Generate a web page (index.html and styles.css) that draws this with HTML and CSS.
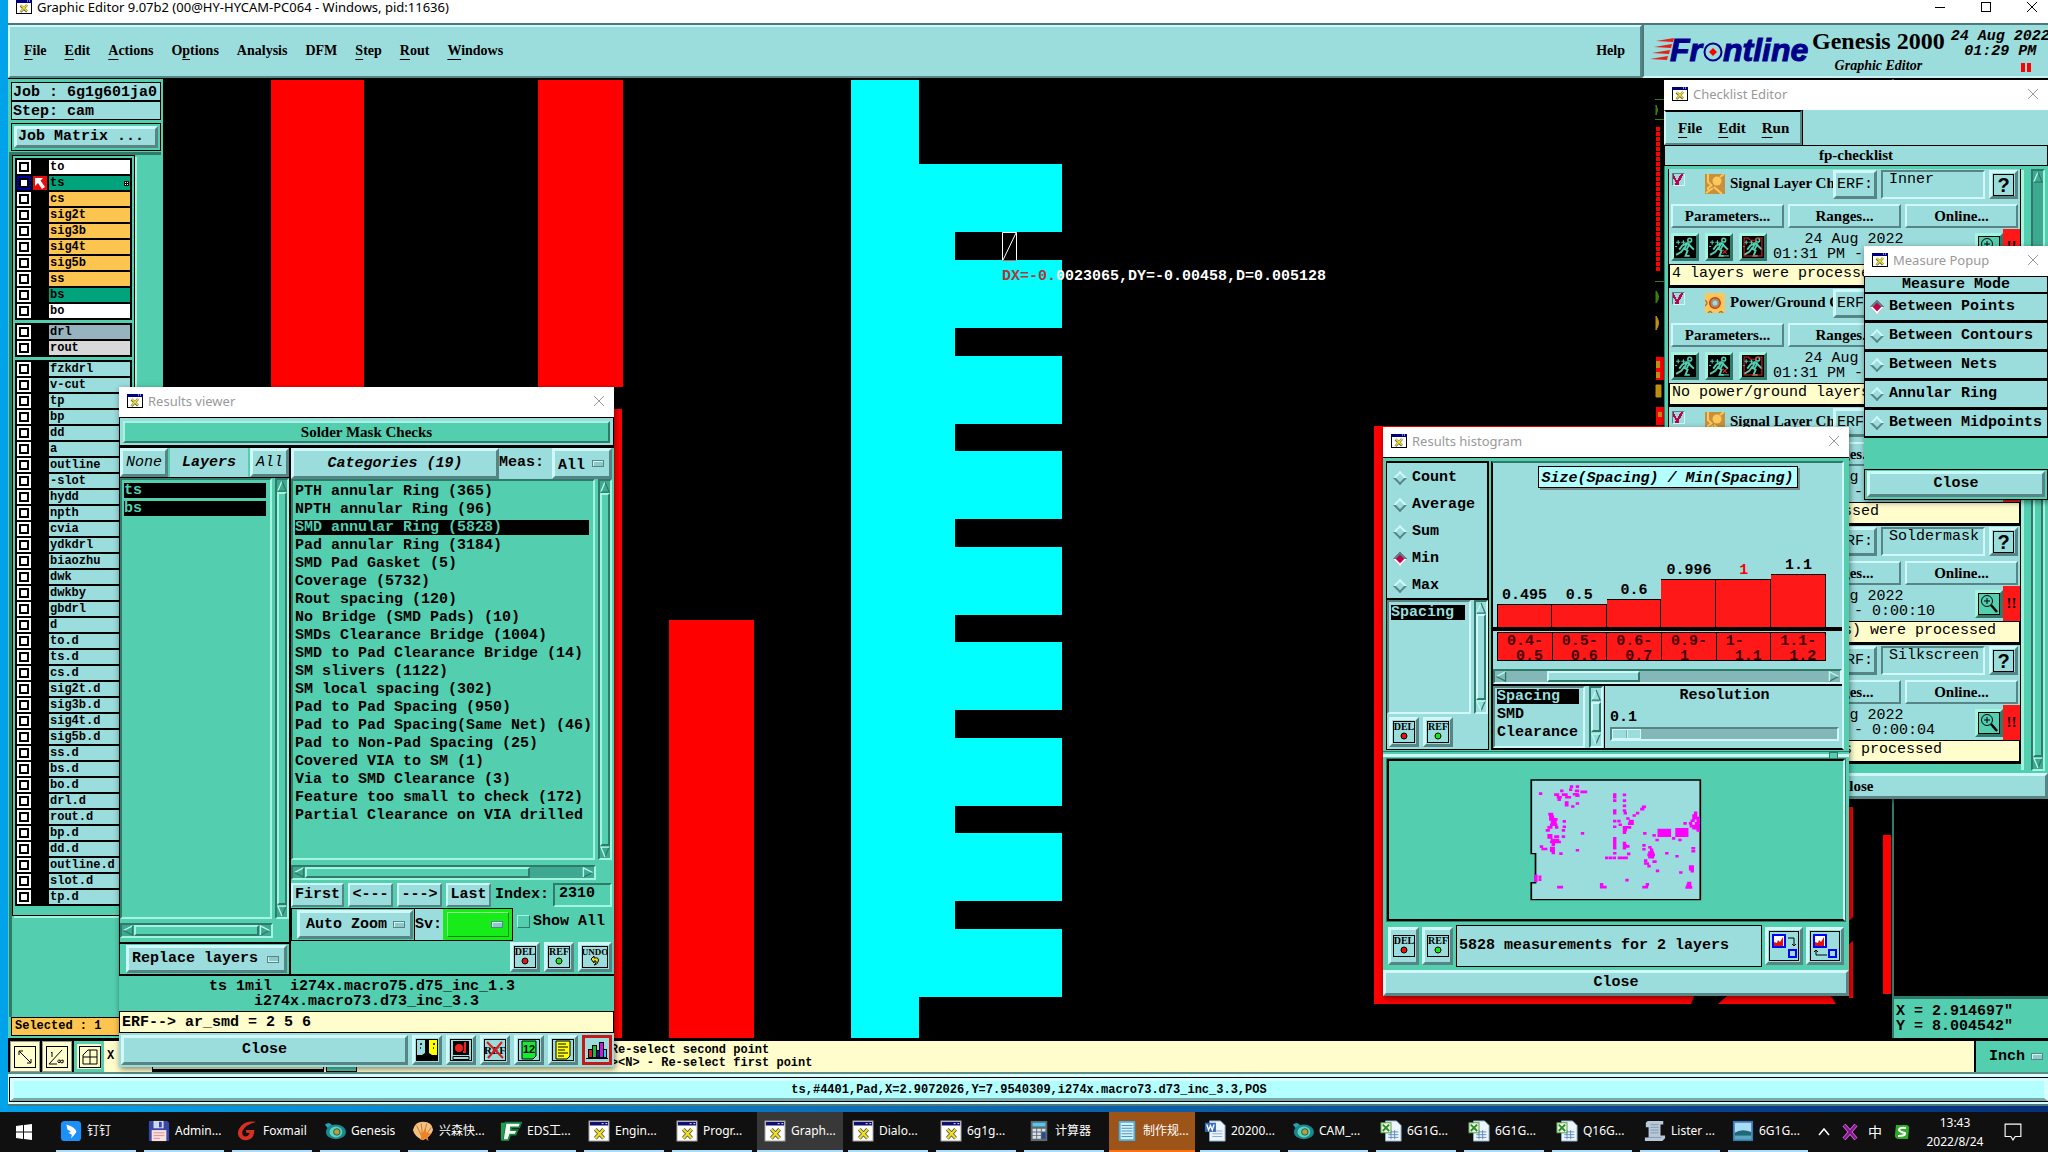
FILE: index.html
```html
<!DOCTYPE html>
<html lang="en">
<head>
    <meta charset="UTF-8">
    <meta name="viewport" content="width=device-width, initial-scale=1.0">
    <title>Graphic Editor 9.07b2</title>
    <link rel="stylesheet" href="styles.css">
</head>
<body>
    <!-- Shared icons -->
    <svg class="defs" width="0" height="0">
        <symbol id="xwin" viewBox="0 0 16 14">
            <rect x="0.5" y="0.5" width="15" height="13" fill="#fff" stroke="#000"/>
            <rect x="0" y="0" width="16" height="3" fill="#000080"/>
            <path d="M11 1h1M13 1h1" stroke="#fff" stroke-width="1"/>
            <path d="M4.500 5.500L11 11.500M11 5L4.500 12" stroke="#555" stroke-width="2.400"/>
            <path d="M4.500 5L11 11M11 5L4.500 11.500" stroke="#f0e020" stroke-width="1.600"/>
        </symbol>
        <symbol id="close" viewBox="0 0 12 12"><path d="M1 1L11 11M11 1L1 11" fill="none" stroke="currentColor"/></symbol>
        <symbol id="up" viewBox="0 0 12 14"><path d="M6 1L1 13" stroke="#b4fff0" stroke-width="1.500"/><path d="M1 13H11L6 1" fill="none" stroke="#2f7a68" stroke-width="1.500"/></symbol>
        <symbol id="down" viewBox="0 0 12 14"><path d="M11 1L6 13" stroke="#2f7a68" stroke-width="1.500"/><path d="M11 1H1L6 13" fill="none" stroke="#b4fff0" stroke-width="1.500"/></symbol>
        <symbol id="left" viewBox="0 0 12 12"><path d="M11 1L1 6" stroke="#b4fff0" stroke-width="1.500"/><path d="M11 1V11L1 6" fill="none" stroke="#2f7a68" stroke-width="1.500"/></symbol>
        <symbol id="right" viewBox="0 0 12 12"><path d="M11 6L1 11" stroke="#2f7a68" stroke-width="1.500"/><path d="M1 11V1L11 6" fill="none" stroke="#b4fff0" stroke-width="1.500"/></symbol>
        <symbol id="del" viewBox="0 0 22 22">
            <rect x="0.500" y="0.500" width="21" height="21" fill="none" stroke="#000"/>
            <text x="11" y="9" text-anchor="middle" font-family="Liberation Serif" font-size="10">DEL</text>
            <circle cx="11" cy="15" r="3" fill="#e81010" stroke="#000"/>
        </symbol>
        <symbol id="ref" viewBox="0 0 22 22">
            <rect x="0.500" y="0.500" width="21" height="21" fill="none" stroke="#000"/>
            <text x="11" y="9" text-anchor="middle" font-family="Liberation Serif" font-size="10">REF</text>
            <circle cx="11" cy="15" r="3" fill="#18e818" stroke="#000"/>
        </symbol>
        <symbol id="man" viewBox="0 0 21 21">
            <rect width="21" height="21" fill="#000"/>
            <path d="M2 6h4M4 4v4M7 6h4M9 4v4M1 10h2" stroke="#53cfb0"/>
            <circle cx="15" cy="4" r="1.800" fill="none" stroke="#53cfb0" stroke-width="1.500"/>
            <path d="M13 6L10 12L13 14L11 19H15M10 11L7 15L2 18M13 7L16 10L19 13M12 7L8 9L5 13M15 7L12 13" fill="none" stroke="#53cfb0" stroke-width="1.800"/>
        </symbol>
        <symbol id="lens" viewBox="0 0 22 22">
            <rect x="0.500" y="0.500" width="21" height="21" fill="none" stroke="#000"/>
            <circle cx="9" cy="8" r="5.500" fill="none" stroke="#000"/>
            <path d="M6 8h6M9 5v6" stroke="#000"/>
            <path d="M13 12L19 19" stroke="#000" stroke-width="2.500"/>
        </symbol>
        <symbol id="signal" viewBox="0 0 20 20">
            <rect width="20" height="20" fill="#c8903c"/>
            <circle cx="12" cy="7" r="4.500" fill="#fdc75a"/>
            <path d="M3 0V8L7 12M7 11L3 14V16M9 13L17 20M15 3L19 0M8 14L1 19" stroke="#fdc75a" stroke-width="2" fill="none"/>
        </symbol>
        <symbol id="ground" viewBox="0 0 20 20">
            <rect width="20" height="20" fill="#fdc75a"/>
            <circle cx="10" cy="10" r="5" fill="#9bdcdc" stroke="#d83818" stroke-width="2"/>
            <circle cx="10" cy="10" r="3.500" fill="none" stroke="#a0906c" stroke-width="2"/>
            <path d="M0 7Q4 10 0 13M3 20Q5 17 7 20M14 20Q16 17 18 20" fill="none" stroke="#a87838" stroke-width="1.500"/>
        </symbol>
        <symbol id="xapp" viewBox="0 0 24 24">
            <rect x="1" y="1" width="22" height="22" fill="#fff" stroke="#888"/>
            <rect x="2" y="2" width="20" height="4" fill="#101070"/>
            <path d="M15 4h2M19 4h2" stroke="#fff"/>
            <path d="M8 10L17 20M17 10L8 20" stroke="#444" stroke-width="4"/>
            <path d="M8 10L17 20M17 10L8 20" stroke="#f0e020" stroke-width="2.500"/>
        </symbol>
        <symbol id="genesis" viewBox="0 0 24 24">
            <path d="M1 5Q6 1 9 6L4 9Z" fill="#28a0b0"/>
            <ellipse cx="13" cy="13" rx="11" ry="8" fill="#188890"/>
            <ellipse cx="13" cy="13" rx="7" ry="6" fill="#60d0b8"/>
            <circle cx="14" cy="13" r="3.500" fill="#b8a030" stroke="#105868"/>
        </symbol>
        <symbol id="excel" viewBox="0 0 24 24">
            <path d="M6 1H18L23 6V23H6Z" fill="#eef4fb" stroke="#8ab"/>
            <path d="M9 13h11M9 16h11M9 19h11M12 11v10M16 11v10" stroke="#5a88c0"/>
            <rect x="1" y="3" width="11" height="11" fill="#e8f4e0" stroke="#4a9a40"/>
            <path d="M3 5L10 12M10 5L3 12" stroke="#2c8a28" stroke-width="2"/>
        </symbol>
    </svg>

    <main class="editor">
        <header class="titlebar">
            <svg class="xicon"><use href="#xwin"/></svg>
            <h1>Graphic Editor 9.07b2 (00@HY-HYCAM-PC064 - Windows, pid:11636)</h1>
            <button aria-label="Minimize"><svg viewBox="0 0 12 12"><path d="M1 6.500H11" stroke="#000"/></svg></button>
            <button aria-label="Maximize"><svg viewBox="0 0 12 12"><rect x="1.500" y="1.500" width="9" height="9" fill="none" stroke="#000"/></svg></button>
            <button aria-label="Close"><svg><use href="#close"/></svg></button>
        </header>

        <div class="top">
            <nav class="menubar">
                <a href="#"><u>F</u>ile</a>
                <a href="#"><u>E</u>dit</a>
                <a href="#"><u>A</u>ctions</a>
                <a href="#">O<u>p</u>tions</a>
                <a href="#">Analysis</a>
                <a href="#">DFM</a>
                <a href="#"><u>S</u>tep</a>
                <a href="#"><u>R</u>out</a>
                <a href="#"><u>W</u>indows</a>
                <a href="#" class="help">Help</a>
            </nav>
            <div class="brand">
                <svg class="frontline" viewBox="0 0 162 34" role="img">
                    <path d="M6 6L24 3L23 7ZM4 12L22 9L21 13ZM2 18L20 15L19 19ZM0 24L18 21L17 25Z" fill="#e82018"/>
                    <text y="26" font-family="Liberation Sans" font-size="32" font-weight="bold" font-style="italic" fill="#000088" stroke="#000088"><tspan x="20">Fr</tspan><tspan x="73">ntline</tspan></text>
                    <circle cx="63" cy="17" r="8.500" fill="none" stroke="#000088" stroke-width="2"/>
                    <path d="M63 13L67 17L63 21L59 17Z" fill="#f00"/>
                </svg>
                <div class="product">
                    <strong>Genesis 2000</strong>
                    <em>Graphic Editor</em>
                </div>
                <div class="clock">24 Aug 2022<br>01:29 PM<i class="pause"></i></div>
            </div>
        </div>

        <div class="workspace">
            <aside class="side">
                <div class="job">Job : 6g1g601ja0</div>
                <div class="job">Step: cam</div>
                <div class="matrix"><button class="btn">Job Matrix ...</button></div>
                <div class="layers">
                    <div class="layer-frame">
                        <ul>
                            <li class="white"><label><input type="checkbox"><span>to</span></label></li>
                            <li class="mask active"><label><input type="checkbox" checked><svg viewBox="0 0 14 14"><path d="M2 2H10L7.500 4.500L12 11L9 13L5 7L2 10Z" fill="#fff"/></svg><span>ts<svg class="grid" viewBox="0 0 5 5"><rect width="5" height="5"/><path d="M1 1.500h1M3 1.500h1M1 3.500h1M3 3.500h1" stroke="#fff"/></svg></span></label></li>
                            <li class="copper"><label><input type="checkbox"><span>cs</span></label></li>
                            <li class="copper"><label><input type="checkbox"><span>sig2t</span></label></li>
                            <li class="copper"><label><input type="checkbox"><span>sig3b</span></label></li>
                            <li class="copper"><label><input type="checkbox"><span>sig4t</span></label></li>
                            <li class="copper"><label><input type="checkbox"><span>sig5b</span></label></li>
                            <li class="copper"><label><input type="checkbox"><span>ss</span></label></li>
                            <li class="mask"><label><input type="checkbox"><span>bs</span></label></li>
                            <li class="white"><label><input type="checkbox"><span>bo</span></label></li>
                        </ul>
                        <ul>
                            <li class="drill"><label><input type="checkbox"><span>drl</span></label></li>
                            <li class="rout"><label><input type="checkbox"><span>rout</span></label></li>
                        </ul>
                        <ul>
                            <li><label><input type="checkbox"><span>fzkdrl</span></label></li>
                            <li><label><input type="checkbox"><span>v-cut</span></label></li>
                            <li><label><input type="checkbox"><span>tp</span></label></li>
                            <li><label><input type="checkbox"><span>bp</span></label></li>
                            <li><label><input type="checkbox"><span>dd</span></label></li>
                            <li><label><input type="checkbox"><span>a</span></label></li>
                            <li><label><input type="checkbox"><span>outline</span></label></li>
                            <li><label><input type="checkbox"><span>-slot</span></label></li>
                            <li><label><input type="checkbox"><span>hydd</span></label></li>
                            <li><label><input type="checkbox"><span>npth</span></label></li>
                            <li><label><input type="checkbox"><span>cvia</span></label></li>
                            <li><label><input type="checkbox"><span>ydkdrl</span></label></li>
                            <li><label><input type="checkbox"><span>biaozhu</span></label></li>
                            <li><label><input type="checkbox"><span>dwk</span></label></li>
                            <li><label><input type="checkbox"><span>dwkby</span></label></li>
                            <li><label><input type="checkbox"><span>gbdrl</span></label></li>
                            <li><label><input type="checkbox"><span>d</span></label></li>
                            <li><label><input type="checkbox"><span>to.d</span></label></li>
                            <li><label><input type="checkbox"><span>ts.d</span></label></li>
                            <li><label><input type="checkbox"><span>cs.d</span></label></li>
                            <li><label><input type="checkbox"><span>sig2t.d</span></label></li>
                            <li><label><input type="checkbox"><span>sig3b.d</span></label></li>
                            <li><label><input type="checkbox"><span>sig4t.d</span></label></li>
                            <li><label><input type="checkbox"><span>sig5b.d</span></label></li>
                            <li><label><input type="checkbox"><span>ss.d</span></label></li>
                            <li><label><input type="checkbox"><span>bs.d</span></label></li>
                            <li><label><input type="checkbox"><span>bo.d</span></label></li>
                            <li><label><input type="checkbox"><span>drl.d</span></label></li>
                            <li><label><input type="checkbox"><span>rout.d</span></label></li>
                            <li><label><input type="checkbox"><span>bp.d</span></label></li>
                            <li><label><input type="checkbox"><span>dd.d</span></label></li>
                            <li><label><input type="checkbox"><span>outline.d</span></label></li>
                            <li><label><input type="checkbox"><span>slot.d</span></label></li>
                            <li><label><input type="checkbox"><span>tp.d</span></label></li>
                        </ul>
                    </div>
                </div>
                <div class="selected">Selected : 1</div>
            </aside>

            <svg class="board">
                <g fill="#f00">
                    <rect x="108" y="1" width="93" height="308"/>
                    <rect x="375" y="1" width="85" height="307"/>
                    <rect x="375" y="330" width="84" height="629"/>
                    <rect x="506" y="541" width="85" height="418"/>
                    <path d="M1211 347H1686V917H1668L1673 925H1563L1552 925L1560 917H1535L1531 925H1211Z"/>
                    <path d="M1686 728h4v110l-4 4zM1686 865l4-3v57h-4z"/>
                    <rect x="1720" y="756" width="8" height="159"/>
                </g>
                <path d="M1531 917H1564L1555 925H1528Z"/>
                <!-- comb pad -->
                <g fill="#0ff">
                    <rect x="688" y="1" width="68" height="958"/>
                    <rect x="755" y="85" width="37" height="833"/>
                    <path d="M791 85h108v68H791zM791 181h108v68H791zM791 277h108v68H791zM791 372h108v68H791zM791 468h108v68H791zM791 563h108v68H791zM791 659h108v68H791zM791 754h108v68H791zM791 850h108v68H791z"/>
                </g>
                <path d="M839.500 181V153.500H853.500V181M840 181L853 154" fill="none" stroke="#fff"/>
                <path d="M840 181.500H853" stroke="#c06060"/>
                <text x="839" y="201" font-family="Liberation Mono" font-size="15" font-weight="bold" fill="#fff"><tspan fill="#b03838">DX=-0.</tspan>0023065,DY=-0.00458,D=0.005128</text>
                <!-- neighbouring nets next to the checklist -->
                <path d="M1492 20.500h10M1492 40.500h10M1492 202.500h10" stroke="#3c8010"/>
                <path d="M1495 48V193" stroke="#f00" stroke-width="4" stroke-dasharray="4 1"/>
                <path d="M1493 26q3 5 0 10zM1493 212q5 6 0 12z" fill="#3c8010" stroke="#3c8010"/>
                <path d="M1493 237q5 7 0 14zM1493 306h5v12h-5z" fill="#c09010" stroke="#c09010"/>
                <path d="M1493 278h8v23h-8zM1493 328h8v18h-8z" fill="#f00"/>
                <path d="M1493 282h4v7h-4zM1493 293h4v6h-4zM1495 333h4v5h-4z" fill="#c09010"/>
            </svg>

            <div class="overview">
                <div class="coords">X = 2.914697"<br>Y = 8.004542"</div>
            </div>
        </div>

        <div class="hintbar">
            <div class="tools">
                <button aria-label="Snap"><svg viewBox="0 0 22 22"><rect x="0.500" y="0.500" width="21" height="21" fill="none" stroke="#000"/><path d="M5 5L17 17M5 9V5H9M17 13V17H13" fill="none" stroke="#000"/></svg></button>
                <button aria-label="Angle"><svg viewBox="0 0 22 22"><rect x="0.500" y="0.500" width="21" height="21" fill="none" stroke="#000"/><path d="M3 18L16 4M3 18H11M6 6V11M5 7L6 6M14 14q-4 0-1 3q3-4 4-3q1 3-1 3q-2 0-2-3" fill="none" stroke="#000"/></svg></button>
                <button class="on" aria-label="Grid"><svg viewBox="0 0 22 22"><rect x="0.500" y="0.500" width="21" height="21" fill="none" stroke="#000"/><path d="M4 18V9L9 4H18V18ZM4 11H18M11 4V18" fill="none" stroke="#000"/></svg></button>
            </div>
            <label class="xfield">X <input type="text"></label>
            <button class="mid" aria-label="Mode"></button>
            <p>M2 Re-select second point<br>&lt;M3&gt;&lt;N&gt; - Re-select first point</p>
            <select class="inch" aria-label="Units"><option>Inch</option></select>
        </div>

        <div class="status"><p>ts,#4401,Pad,X=2.9072026,Y=7.9540309,i274x.macro73.d73_inc_3.3,POS</p></div>
    </main>

    <!-- Checklist Editor -->
    <section class="window checklist">
        <header><svg class="xicon"><use href="#xwin"/></svg><h2>Checklist Editor</h2><button aria-label="Close"><svg><use href="#close"/></svg></button></header>
        <nav>
            <a href="#"><u>F</u>ile</a>
            <a href="#"><u>E</u>dit</a>
            <a href="#"><u>R</u>un</a>
        </nav>
        <h3>fp-checklist</h3>
        <div class="list-wrap">
            <div class="items">
                <article>
                    <div class="head"><input type="checkbox" checked aria-label="Signal Layer"><svg><use href="#signal"/></svg><b>Signal Layer Checks</b><button class="btn">ERF:</button><input type="text" value="Inner" aria-label="ERF"><button class="btn ask"><span>?</span></button></div>
                    <div class="actions"><button class="btn">Parameters...</button><button class="btn">Ranges...</button><button class="btn">Online...</button></div>
                    <div class="run">
                        <button aria-label="Run"><svg><use href="#man"/></svg></button><button aria-label="Run on region"><svg viewBox="0 0 21 21"><use href="#man"/><path d="M14 13L18 17M18 13L14 17" stroke="#e02020"/><path d="M13 19H20" stroke="#53cfb0"/></svg></button><button aria-label="Run on profile"><svg viewBox="0 0 21 21"><use href="#man"/><path d="M2 2H6L8 4H13L15 2H19V19H2Z" fill="none" stroke="#e02020"/></svg></button>
                        <p>24 Aug 2022<br>01:31 PM - 0:00:10</p>
                        <button class="zoom" aria-label="Show results"><svg><use href="#lens"/></svg></button><span class="alert">!!</span>
                    </div>
                    <p class="note">4 layers were processed</p>
                </article>
                <article>
                    <div class="head"><input type="checkbox" checked aria-label="Power/Ground"><svg><use href="#ground"/></svg><b>Power/Ground Checks</b><button class="btn">ERF:</button><input type="text" value="Inner" aria-label="ERF"><button class="btn ask"><span>?</span></button></div>
                    <div class="actions"><button class="btn">Parameters...</button><button class="btn">Ranges...</button><button class="btn">Online...</button></div>
                    <div class="run">
                        <button aria-label="Run"><svg><use href="#man"/></svg></button><button aria-label="Run on region"><svg viewBox="0 0 21 21"><use href="#man"/><path d="M14 13L18 17M18 13L14 17" stroke="#e02020"/><path d="M13 19H20" stroke="#53cfb0"/></svg></button><button aria-label="Run on profile"><svg viewBox="0 0 21 21"><use href="#man"/><path d="M2 2H6L8 4H13L15 2H19V19H2Z" fill="none" stroke="#e02020"/></svg></button>
                        <p>24 Aug 2022<br>01:31 PM - 0:00:00</p>
                        <button class="zoom" aria-label="Show results"><svg><use href="#lens"/></svg></button><span class="alert">!!</span>
                    </div>
                    <p class="note">No power/ground layers</p>
                </article>
                <article>
                    <div class="head"><input type="checkbox" checked aria-label="Signal Layer"><svg><use href="#signal"/></svg><b>Signal Layer Checks</b><button class="btn">ERF:</button><input type="text" value="Outer" aria-label="ERF"><button class="btn ask"><span>?</span></button></div>
                    <div class="actions"><button class="btn">Parameters...</button><button class="btn">Ranges...</button><button class="btn">Online...</button></div>
                    <div class="run">
                        <button aria-label="Run"><svg><use href="#man"/></svg></button><button aria-label="Run on region"><svg><use href="#man"/></svg></button><button aria-label="Run on profile"><svg><use href="#man"/></svg></button>
                        <p>24 Aug 2022<br>01:31 PM - 0:00:10</p>
                        <button class="zoom" aria-label="Show results"><svg><use href="#lens"/></svg></button><span class="alert">!!</span>
                    </div>
                    <p class="note">4 layers were processed</p>
                </article>
                <article>
                    <div class="head"><input type="checkbox" checked aria-label="Solder Mask"><svg><use href="#signal"/></svg><b>Solder Mask Checks</b><button class="btn">ERF:</button><input type="text" value="Soldermask" aria-label="ERF"><button class="btn ask"><span>?</span></button></div>
                    <div class="actions"><button class="btn">Parameters...</button><button class="btn">Ranges...</button><button class="btn">Online...</button></div>
                    <div class="run">
                        <button aria-label="Run"><svg><use href="#man"/></svg></button><button aria-label="Run on region"><svg><use href="#man"/></svg></button><button aria-label="Run on profile"><svg><use href="#man"/></svg></button>
                        <p>24 Aug 2022<br>01:31 PM - 0:00:10</p>
                        <button class="zoom" aria-label="Show results"><svg><use href="#lens"/></svg></button><span class="alert">!!</span>
                    </div>
                    <p class="note">2 soldermask layer(s) were processed</p>
                </article>
                <article>
                    <div class="head"><input type="checkbox" checked aria-label="Silk Screen"><svg><use href="#signal"/></svg><b>Silk Screen Checks</b><button class="btn">ERF:</button><input type="text" value="Silkscreen" aria-label="ERF"><button class="btn ask"><span>?</span></button></div>
                    <div class="actions"><button class="btn">Parameters...</button><button class="btn">Ranges...</button><button class="btn">Online...</button></div>
                    <div class="run">
                        <button aria-label="Run"><svg><use href="#man"/></svg></button><button aria-label="Run on region"><svg><use href="#man"/></svg></button><button aria-label="Run on profile"><svg><use href="#man"/></svg></button>
                        <p>24 Aug 2022<br>01:31 PM - 0:00:04</p>
                        <button class="zoom" aria-label="Show results"><svg><use href="#lens"/></svg></button><span class="alert">!!</span>
                    </div>
                    <p class="note">2 silk screen layers processed</p>
                </article>
            </div>
            <div class="vbar low"><svg><use href="#up"/></svg><i></i><svg><use href="#down"/></svg></div>
        </div>
        <button class="btn wide">Close</button>
    </section>

    <!-- Measure Popup -->
    <section class="window measure">
        <header><svg class="xicon"><use href="#xwin"/></svg><h2>Measure Popup</h2><button aria-label="Close"><svg><use href="#close"/></svg></button></header>
        <h3>Measure Mode</h3>
        <label><input type="radio" name="measure" checked>Between Points</label>
        <label><input type="radio" name="measure">Between Contours</label>
        <label><input type="radio" name="measure">Between Nets</label>
        <label><input type="radio" name="measure">Annular Ring</label>
        <label><input type="radio" name="measure">Between Midpoints</label>
        <div class="foot"><button class="btn">Close</button></div>
    </section>

    <!-- Results viewer -->
    <section class="window viewer">
        <header><svg class="xicon"><use href="#xwin"/></svg><h2>Results viewer</h2><button aria-label="Close"><svg><use href="#close"/></svg></button></header>
        <h3><span>Solder Mask Checks</span></h3>
        <div class="columns">
            <div class="col-layers">
                <div class="picker"><button class="btn">None</button><b>Layers</b><button class="btn">All</button></div>
                <div class="pane">
                    <ul class="listbox"><li class="sel">ts</li><li class="sel">bs</li></ul>
                    <div class="vbar"><svg><use href="#up"/></svg><i></i><svg><use href="#down"/></svg></div>
                </div>
                <div class="hbar"><svg><use href="#left"/></svg><i></i><svg><use href="#right"/></svg></div>
                <div class="replace"><select class="btn" aria-label="Layer mode"><option>Replace layers</option></select></div>
            </div>
            <div class="col-cats">
                <div class="cats-head">
                    <button class="btn">Categories (19)</button>
                    <label>Meas:<select class="btn"><option>All</option></select></label>
                </div>
                <div class="pane">
                    <ul class="listbox">
                        <li>PTH annular Ring (365)</li>
                        <li>NPTH annular Ring (96)</li>
                        <li class="sel">SMD annular Ring (5828)</li>
                        <li>Pad annular Ring (3184)</li>
                        <li>SMD Pad Gasket (5)</li>
                        <li>Coverage (5732)</li>
                        <li>Rout spacing (120)</li>
                        <li>No Bridge (SMD Pads) (10)</li>
                        <li>SMDs Clearance Bridge (1004)</li>
                        <li>SMD to Pad Clearance Bridge (14)</li>
                        <li>SM slivers (1122)</li>
                        <li>SM local spacing (302)</li>
                        <li>Pad to Pad Spacing (950)</li>
                        <li>Pad to Pad Spacing(Same Net) (46)</li>
                        <li>Pad to Non-Pad Spacing (25)</li>
                        <li>Covered VIA to SM (1)</li>
                        <li>Via to SMD Clearance (3)</li>
                        <li>Feature too small to check (172)</li>
                        <li>Partial Clearance on VIA drilled</li>
                    </ul>
                    <div class="vbar"><svg><use href="#up"/></svg><i></i><svg><use href="#down"/></svg></div>
                </div>
                <div class="hbar part"><svg><use href="#left"/></svg><i></i><svg><use href="#right"/></svg></div>
                <div class="seek">
                    <button class="btn">First</button><button class="btn">&lt;---</button><button class="btn">---&gt;</button><button class="btn">Last</button>
                    <label>Index: <input type="text" value="2310"></label>
                </div>
                <div class="zoomrow">
                    <div class="auto"><select class="btn" aria-label="Zoom mode"><option>Auto Zoom</option></select></div>
                    <label class="sv"><span>Sv:</span><select class="btn"><option></option></select></label>
                    <label class="showall"><input type="checkbox">Show All</label>
                </div>
                <div class="marks">
                    <button class="btn" aria-label="Delete"><svg><use href="#del"/></svg></button>
                    <button class="btn" aria-label="Reference"><svg><use href="#ref"/></svg></button>
                    <button class="btn undo" aria-label="Undo"><svg viewBox="0 0 26 22"><rect x="0.500" y="0.500" width="25" height="21" fill="none" stroke="#000"/><text x="13" y="9" text-anchor="middle" font-family="Liberation Serif" font-size="9">UNDO</text><path d="M9 13L12 10V12Q18 11 16 16Q15 19 12 19Q15 17 14 15H12V17Z" fill="#f0e020" stroke="#000"/></svg></button>
                </div>
            </div>
        </div>
        <p class="info">ts 1mil&nbsp; i274x.macro75.d75_inc_1.3&nbsp;<br>i274x.macro73.d73_inc_3.3</p>
        <p class="erf">ERF--&gt; ar_smd = 2 5 6</p>
        <div class="foot">
            <button class="btn grow">Close</button>
            <button class="btn" aria-label="Contrast"><svg viewBox="0 0 22 22"><rect width="22" height="22" fill="#000"/><path d="M1 1H9V14L6 16H1Z" fill="#9bdcdc"/><path d="M13 1H21V16H16L13 14Z" fill="#ff0"/><path d="M4 5h2M4 9h1M17 5h2M17 9h1" stroke="#000" stroke-width="1.500"/></svg></button>
            <button class="btn" aria-label="Record"><svg viewBox="0 0 22 22"><rect x="0.500" y="0.500" width="21" height="21" fill="none" stroke="#000"/><rect x="3" y="2" width="16" height="14"/><circle cx="9" cy="9" r="4" fill="#f02020"/><path d="M15 3V13H13" fill="none" stroke="#f02020" stroke-width="2"/><path d="M3 17.500H19V20.500H3Z" fill="#9bdcdc" stroke="#000"/></svg></button>
            <button class="btn" aria-label="Clear reference"><svg viewBox="0 0 22 22"><rect x="0.500" y="0.500" width="21" height="21" fill="none" stroke="#000"/><text x="11" y="15" text-anchor="middle" font-family="Liberation Serif" font-size="11">REF</text><path d="M3 3L19 19M18 3L4 19" stroke="#e01818" stroke-width="2"/></svg></button>
            <button class="btn" aria-label="Numbers"><svg viewBox="0 0 22 22"><rect x="0.500" y="0.500" width="21" height="21" fill="none" stroke="#000"/><path d="M4 2H18V17L15 20H4Z" fill="#18e830" stroke="#000"/><text x="11" y="14" text-anchor="middle" font-family="Liberation Sans" font-weight="bold" font-size="11">12</text></svg></button>
            <button class="btn" aria-label="Report"><svg viewBox="0 0 22 22"><rect x="0.500" y="0.500" width="21" height="21" fill="none" stroke="#000"/><path d="M4 2H18V17L15 20H4Z" fill="#ff0" stroke="#000"/><path d="M6 5h8M6 8h10M6 11h7M6 14h10M6 17h6" stroke="#000"/></svg></button>
            <button class="btn hist" aria-label="Histogram"><svg viewBox="0 0 22 22"><g stroke="#000"><rect x="2.500" y="10.500" width="4" height="8" fill="#e02020"/><rect x="6.500" y="6.500" width="4" height="12" fill="#18c030"/><rect x="10.500" y="11.500" width="3" height="7" fill="#1010c0"/><rect x="13.500" y="3.500" width="4" height="15" fill="#c020d0"/><rect x="17.500" y="10.500" width="3" height="8" fill="#20d0ff"/><path d="M0 19.500H22"/></g></svg></button>
        </div>
    </section>

    <!-- Results histogram -->
    <section class="window histogram">
        <header><svg class="xicon"><use href="#xwin"/></svg><h2>Results histogram</h2><button aria-label="Close"><svg><use href="#close"/></svg></button></header>
        <div class="hist-top">
            <div class="hist-left">
                <div class="stats">
                    <label><input type="radio" name="stat">Count</label>
                    <label><input type="radio" name="stat">Average</label>
                    <label><input type="radio" name="stat">Sum</label>
                    <label><input type="radio" name="stat" checked>Min</label>
                    <label><input type="radio" name="stat">Max</label>
                </div>
                <div class="pane">
                    <ul class="listbox"><li class="sel">Spacing</li></ul>
                    <div class="vbar"><svg><use href="#up"/></svg><i></i><svg><use href="#down"/></svg></div>
                </div>
                <div class="marks">
                    <button class="btn" aria-label="Delete"><svg><use href="#del"/></svg></button>
                    <button class="btn" aria-label="Reference"><svg><use href="#ref"/></svg></button>
                </div>
            </div>
            <div class="hist-right">
                <h3>Size(Spacing) / Min(Spacing)</h3>
                <div class="bars">
                    <div>0.495<i style="height: 23px"></i></div>
                    <div>0.5<i style="height: 23px"></i></div>
                    <div>0.6<i style="height: 28px"></i></div>
                    <div>0.996<i style="height: 48px"></i></div>
                    <div class="hot">1<i style="height: 48px"></i></div>
                    <div>1.1<i style="height: 53px"></i></div>
                </div>
                <div class="ranges">
                    <span>0.4-<br>&nbsp;0.5</span>
                    <span>0.5-<br>&nbsp;0.6</span>
                    <span>0.6-<br>&nbsp;0.7</span>
                    <span>0.9-<br>&nbsp;1</span>
                    <span>1-<br>&nbsp;1.1</span>
                    <span>1.1-<br>&nbsp;1.2</span>
                </div>
                <div class="hbar"><svg><use href="#left"/></svg><i></i><svg><use href="#right"/></svg></div>
                <div class="resolution">
                    <ul class="listbox"><li class="sel">Spacing</li><li>SMD</li><li>Clearance</li></ul>
                    <div class="vbar"><svg><use href="#up"/></svg><i></i><svg><use href="#down"/></svg></div>
                    <label><span>Resolution</span>0.1<input type="range" min="0" max="100" value="0"></label>
                </div>
            </div>
        </div>
        <div class="sash"><i></i></div>
        <div class="map">
            <svg viewBox="349 116 406 368" preserveAspectRatio="none">
                <path d="M352 119H751V480H352V429H362V341H352Z" fill="#9bdcdc" stroke="#000" stroke-width="4"/>
                <g stroke="#f0f" stroke-width="8">
                    <path d="M370 160h8M443 139h8M457 139h8M420 152h8M441 148h8M455 152h10M468 155h16M406 163h12M424 163h14M450 162h14M412 171h12M432 171h14M414 178h8M456 166h10M431 187h9M431 195h9M446 199h8M457 190h8"/>
                    <path d="M392 222h12M394 230h12M394 238h20M398 246h14M426 244h8M396 254h18M390 262h12M408 262h8M426 260h8M386 271h10M424 271h8M469 280h8M390 286h12M390 292h12M406 290h12M424 290h8M398 300h20M396 306h26M400 314h8M372 320h8M376 327h14M396 324h12M396 332h12M400 339h8M418 341h8M457 331h8"/>
                    <path d="M545 163h8M545 171h8M545 181h8M568 164h8M568 181h8M568 197h8M545 211h8M545 219h8M568 211h8M570 219h8M613 200h10M609 207h10M599 219h8M591 226h8M576 235h8M545 243h8M555 243h8M582 243h12M580 251h14M545 260h8M558 254h8M568 262h20M568 270h10M568 278h8M545 295h8M545 303h8M545 311h8M545 319h8M545 325h8M568 309h8M568 317h10M568 325h8M576 319h8M545 340h8M578 342h8M526 354h8M535 354h8M544 354h8M556 354h24"/>
                    <path d="M616 280h8M638 286h8M645 300h8M614 316h8M614 328h8M628 322h8M632 330h8M628 338h14M626 345h18M628 352h14M618 362h8M638 365h10M618 371h12M626 379h8M646 393h8M668 340h8M692 349h8M730 325h9M730 334h9M684 295h8M699 300h8M711 250h8M724 380h12M724 388h12M728 394h8M701 398h8M574 421h8"/>
                    <path d="M736 218h8M732 226h12M732 234h18M728 242h10M742 242h8M724 250h8M738 250h12M726 258h22M732 264h18M742 271h8"/>
                    <path d="M359 408h8M359 416h8M359 423h8M369 411h7M369 420h7M413 442h14M514 434h8M514 442h16M622 434h8M614 442h14M720 430h10M718 436h12M716 443h16"/>
                </g>
                <path d="M650 266h32v25h-32zM692 264h31v27h-31z" fill="#f0f"/>
            </svg>
        </div>
        <div class="summary">
            <button class="btn" aria-label="Delete"><svg><use href="#del"/></svg></button>
            <button class="btn" aria-label="Reference"><svg><use href="#ref"/></svg></button>
            <p>5828 measurements for 2 layers</p>
            <button class="btn" aria-label="Export"><svg class="big" viewBox="0 0 30 30"><rect x="0.500" y="0.500" width="29" height="29" fill="none" stroke="#000"/><rect x="4" y="4" width="12" height="12" fill="#fff" stroke="#00f" stroke-width="2"/><path d="M5 15V11L8 12L9 9L11 11L14 6V15Z" fill="#e01010"/><path d="M19 7H25V15M23 13L25 15L27 13" fill="none" stroke="#000"/><rect x="20" y="19" width="7" height="7" fill="none" stroke="#00f" stroke-width="2"/></svg></button>
            <button class="btn" aria-label="Import"><svg class="big" viewBox="0 0 30 30"><rect x="0.500" y="0.500" width="29" height="29" fill="none" stroke="#000"/><rect x="4" y="4" width="12" height="12" fill="#fff" stroke="#00f" stroke-width="2"/><path d="M5 15V11L8 12L9 9L11 11L14 6V15Z" fill="#e01010"/><path d="M17 24H6V19M4 21L6 19L8 21" fill="none" stroke="#000"/><rect x="19" y="19" width="7" height="7" fill="none" stroke="#00f" stroke-width="2"/></svg></button>
        </div>
        <button class="btn wide">Close</button>
    </section>

    <footer class="taskbar">
        <button class="start" aria-label="Start"><svg viewBox="0 0 16 16"><path d="M0 2L7 1V7.500H0ZM8 1L16 0V7.500H8ZM0 8.500H7V15L0 14ZM8 8.500H16V16L8 15Z" fill="#fff"/></svg></button>
        <button class="task"><svg viewBox="0 0 24 24"><rect x="1" y="1" width="22" height="22" rx="4" fill="#1b90f8"/><path d="M7 5Q17 8 18 13L15 17L12 20L13 16L9 14L12 13L8 10Z" fill="#fff"/></svg>钉钉</button>
        <button class="task"><svg viewBox="0 0 24 24"><path d="M1 1H21L23 3V23H1Z" fill="#3848a8"/><rect x="6" y="1" width="11" height="8" fill="#d0d8f0"/><rect x="12" y="2" width="3" height="6" fill="#3848a8"/><rect x="4" y="11" width="16" height="12" fill="#f8e0e0"/><path d="M6 14h12M6 17h12M6 20h7" stroke="#d88"/></svg>Admin...</button>
        <button class="task"><svg viewBox="0 0 24 24"><path d="M22 2Q12 0 6 6Q0 12 3 18Q7 24 15 21Q20 19 20 11H11V14H15Q14 18 10 18Q6 17 7 12Q10 5 22 2Z" fill="#d83020"/></svg>Foxmail</button>
        <button class="task"><svg><use href="#genesis"/></svg>Genesis</button>
        <button class="task"><svg viewBox="0 0 24 24"><path d="M12 2Q22 2 23 11Q20 19 12 22Q3 19 1 11Q3 2 12 2Z" fill="#f4c080"/><path d="M12 21L5 6M12 21L10 4M12 21L16 4M12 21L21 8" stroke="#c07830"/><path d="M14 9L16 14L21 15L17 18L18 23L14 20L9 22L11 17L8 14L12 14Z" fill="#f08020"/></svg>兴森快...</button>
        <button class="task"><svg viewBox="0 0 24 24"><path d="M6 3H23L21 8H12V11H19L17 16H11L9 22H3Z" fill="#f4fff4" stroke="#188040" stroke-width="2"/><path d="M1 3H6L3 22H1Z" fill="#20a050"/></svg>EDS工...</button>
        <button class="task"><svg><use href="#xapp"/></svg>Engin...</button>
        <button class="task"><svg><use href="#xapp"/></svg>Progr...</button>
        <button class="task current"><svg><use href="#xapp"/></svg>Graph...</button>
        <button class="task"><svg><use href="#xapp"/></svg>Dialo...</button>
        <button class="task"><svg><use href="#xapp"/></svg>6g1g...</button>
        <button class="task"><svg viewBox="0 0 24 24"><rect x="3" y="1" width="18" height="22" fill="#606870"/><rect x="5" y="3" width="14" height="4" fill="#50c8f0"/><path d="M5 11h4M10 11h4M15 11h4M5 15h4M10 15h4M5 19h4M10 19h4" stroke="#d8e0e8" stroke-width="3"/><path d="M15 17h4" stroke="#205090" stroke-width="7"/></svg>计算器</button>
        <button class="task flash"><svg viewBox="0 0 24 24"><rect x="3" y="1" width="18" height="22" rx="1" fill="#48b0e0"/><rect x="5" y="3" width="14" height="18" fill="#d8f0fa"/><path d="M6 6h12M6 9h12M6 12h12M6 15h12M6 18h12" stroke="#3890c0"/></svg>制作规...</button>
        <button class="task"><svg viewBox="0 0 24 24"><path d="M6 1H18L23 6V23H6Z" fill="#eef4fb" stroke="#8ab"/><path d="M9 12h11M9 15h11M9 18h11" stroke="#88a8d0"/><rect x="1" y="3" width="12" height="10" fill="#3868b8"/><path d="M3 5L5 11L7 6L9 11L11 5" fill="none" stroke="#fff" stroke-width="1.500"/></svg>20200...</button>
        <button class="task"><svg><use href="#genesis"/></svg>CAM_...</button>
        <button class="task"><svg><use href="#excel"/></svg>6G1G...</button>
        <button class="task"><svg><use href="#excel"/></svg>6G1G...</button>
        <button class="task"><svg><use href="#excel"/></svg>Q16G...</button>
        <button class="task"><svg viewBox="0 0 24 24"><path d="M4 1H21V5H18V17H23V20L20 23H1V19H5V8H2V3Z" fill="#b8c8d8"/><path d="M7 5h9M7 8h9M7 11h9M7 14h9M5 19h14" stroke="#8098b0"/></svg>Lister ...</button>
        <button class="task"><svg viewBox="0 0 24 24"><rect x="1" y="1" width="22" height="22" fill="#3c78b8"/><rect x="3" y="3" width="18" height="18" fill="#a8dcf4"/><path d="M3 14Q10 9 21 13V21H3Z" fill="#206878"/><path d="M3 17H21V21H3Z" fill="#58a8c0"/></svg>6G1G...</button>
        <div class="tray">
            <svg viewBox="0 0 16 16"><path d="M3 11L8 5L13 11" fill="none" stroke="#fff" stroke-width="1.500"/></svg>
            <svg viewBox="0 0 16 16"><path d="M2 1L14 15M14 1L2 15" stroke="#e070d8" stroke-width="4"/><path d="M2 1L14 15M14 1L2 15" stroke="#801890" stroke-width="2.500"/></svg>
            <span>中</span>
            <svg viewBox="0 0 16 16"><path d="M2 1H13Q16 2 15 5L14 15H4Q0 14 1 10Z" fill="#30a828"/><path d="M12 4Q5 3 5 6Q6 8 11 9Q12 12 4 12" fill="none" stroke="#fff" stroke-width="2"/></svg>
            <time>13:43<br>2022/8/24</time>
            <svg class="bell" viewBox="0 0 16 16"><path d="M1 1H15V12H10L8 15L6 12H1Z" fill="none" stroke="#fff"/></svg>
        </div>
    </footer>
</body>
</html>
```

FILE: styles.css
```css
:root {
    --light: #9bdcdc;
    --light-hi: #d0f8f8;
    --light-lo: #578585;
    --green: #53cfb0;
    --green-hi: #a4f5e0;
    --green-lo: #2f7a68;
    --yellow: #fffdcc;
    --mono: "Liberation Mono", monospace;
    --serif: "Liberation Serif", serif;
    --ui: "Noto Sans", "Noto Sans CJK SC", sans-serif;
}

* {
    box-sizing: border-box;
}

body {
    margin: 0;
    height: 100vh;
    display: flex;
    flex-direction: column;
    overflow: hidden;
    font: bold 15px/18px var(--mono);
    color: #000;
    background: linear-gradient(90deg, #00a2ea, #0b70b8 40%, #06307c);
}

h1, h2, h3, p, ul {
    margin: 0;
    padding: 0;
    list-style: none;
    font-weight: inherit;
    font-size: inherit;
}

a {
    color: inherit;
    text-decoration: none;
}

u {
    text-underline-offset: 4px;
}

svg {
    display: block;
    flex: none;
}

.defs {
    position: absolute;
}

button, input, select {
    font: inherit;
    color: inherit;
    margin: 0;
    padding: 0;
    border: 0;
    border-radius: 0;
    background: none;
    appearance: none;
}

.btn {
    background-color: var(--light);
    border: 3px solid;
    border-color: var(--light-hi) var(--light-lo) var(--light-lo) var(--light-hi);
    white-space: nowrap;
}

.btn svg {
    width: 22px;
    height: 22px;
    margin: auto;
}

select {
    padding-left: 6px;
    background-repeat: no-repeat;
    background-image: linear-gradient(#8fc8c8, #8fc8c8), linear-gradient(#d0f8f8, #d0f8f8), linear-gradient(#578585, #578585);
    background-size: 9px 4px, 10px 5px, 12px 7px;
    background-position: right 6px center, right 6px center, right 5px center;
}

/* Main window */
.editor {
    flex: 1;
    min-height: 0;
    display: flex;
    flex-direction: column;
    margin: 0 0 6px 8px;
    background: var(--green);
}

.titlebar {
    height: 23px;
    display: flex;
    align-items: flex-start;
    padding: 0 10px 0 8px;
    background: #fff;
    font: 13px/15px var(--ui);
}

.titlebar h1 {
    flex: 1;
    padding-left: 5px;
}

.titlebar button {
    margin-left: 34px;
    padding-top: 1px;
}

.titlebar button svg, header button svg {
    width: 12px;
    height: 12px;
}

.xicon {
    width: 16px;
    height: 14px;
}

.top {
    height: 56px;
    display: flex;
    border-top: 2px solid #4f7878;
    border-bottom: 1px solid #000;
    background: var(--light);
    font: bold 14px/18px var(--serif);
}

.menubar {
    flex: 1;
    display: flex;
    align-items: center;
    gap: 18px;
    padding: 0 15px 2px 14px;
    border: 2px solid;
    border-color: var(--light-hi) var(--light-lo) var(--light-lo) var(--light-hi);
}

.help {
    margin-left: auto;
}

.brand {
    width: 406px;
    display: flex;
    padding: 4px 0 0 6px;
    overflow: hidden;
    white-space: nowrap;
    border-left: 2px solid #4f7878;
    border-bottom: 2px solid var(--light-hi);
}

.frontline {
    width: 162px;
    height: 34px;
    margin-top: 6px;
}

.product {
    display: flex;
    flex-direction: column;
    text-align: center;
}

.product strong {
    font-size: 24px;
    line-height: 24px;
}

.product em {
    line-height: 26px;
}

.clock {
    flex: none;
    margin-left: 6px;
    font: italic bold 15px/15px var(--mono);
    text-align: center;
    position: relative;
}

.pause {
    position: absolute;
    left: 70px;
    top: 34px;
    width: 10px;
    height: 9px;
    border: solid #f00;
    border-width: 0 4px;
}

.workspace {
    flex: 1;
    min-height: 0;
    display: flex;
    border-bottom: 3px solid #000;
    background: #000;
}

.side {
    width: 155px;
    display: flex;
    flex-direction: column;
    padding: 3px 2px 2px 3px;
    background: var(--green);
}

.job {
    height: 19px;
    line-height: 19px;
    background: var(--light);
    border: 1px solid #000;
    white-space: nowrap;
    padding-left: 1px;
}

.matrix {
    margin: 3px 0 1px;
    padding: 2px;
    border: 1px solid #000;
}

.matrix .btn {
    width: 100%;
    height: 22px;
    line-height: 16px;
    text-align: left;
    padding-left: 1px;
}

.layers {
    flex: 1;
    min-height: 0;
    border-top: 3px solid var(--green-lo);
    border-left: 3px solid var(--green-lo);
    margin-left: -2px;
}

.layer-frame {
    width: 123px;
    padding: 2px 2px 9px;
    border: 1px solid #000;
    display: flex;
    flex-direction: column;
    gap: 3px;
    box-shadow: 2px 2px 0 var(--green-hi);
}

.layers ul {
    display: flex;
    flex-direction: column;
    gap: 2px;
    padding: 2px;
    background: #000;
    font-size: 12px;
    line-height: 14px;
}

.layers label {
    display: flex;
    justify-content: space-between;
}

.layers input {
    width: 14px;
    height: 14px;
    border: 2px solid #fff;
    background: #fff;
    box-shadow: inset 0 0 0 2px #000;
}

.layers span {
    width: 81px;
    display: flex;
    justify-content: space-between;
    align-items: center;
    padding: 0 1px;
    background: var(--light);
}

.layers .white span {
    background: #fff;
}

.layers .mask span {
    background: #00a37c;
}

.layers .copper span {
    background: #fdc44f;
}

.layers .drill span {
    background: #97b3c0;
}

.layers .rout span {
    background: #d8d8d8;
}

.layers .active input {
    border-color: #0000a0;
}

.active label > svg {
    width: 14px;
    height: 14px;
    background: #e80c0c;
}

.grid {
    width: 5px;
    height: 5px;
}

.selected {
    height: 19px;
    line-height: 17px;
    font-size: 12px;
    padding-left: 3px;
    background: #fdc44f;
    border: 1px solid #000;
}

.board {
    flex: 1;
    min-width: 0;
    height: 100%;
}

.overview {
    width: 156px;
    display: flex;
    flex-direction: column;
    justify-content: flex-end;
    border-left: 2px solid var(--green-lo);
}

.coords {
    height: 42px;
    padding: 5px 0 0 2px;
    line-height: 15px;
    background: var(--green);
    border-top: 3px solid var(--green-lo);
}

.hintbar {
    height: 31px;
    display: flex;
    background: var(--yellow);
    font-size: 12px;
    line-height: 13px;
}

.tools {
    display: flex;
    gap: 2px;
    padding-left: 2px;
    background: #000;
}

.tools button {
    width: 30px;
    padding: 2px;
    background: var(--yellow);
    border: 1px solid #999;
}

.tools svg {
    width: 22px;
    height: 22px;
    margin: auto;
}

.tools .on {
    border: 3px solid var(--green);
}

.xfield {
    display: flex;
    align-items: center;
    gap: 38px;
    padding-left: 3px;
}

.xfield input {
    width: 172px;
    height: 100%;
    border: 1px solid #000;
    border-bottom-width: 3px;
}

.mid {
    width: 31px;
    margin: 0 2px;
    background: var(--green);
    border: 1px solid #000;
}

.hintbar p {
    flex: 1;
    padding: 3px 0 0 230px;
}

.inch {
    width: 72px;
    border: solid var(--green);
    border-width: 2px 0 2px 7px;
    background-color: var(--green);
    font-size: 15px;
    box-shadow: -2px 0 0 #000;
}

.status {
    height: 34px;
    padding: 4px 0 3px 2px;
    border-top: 2px solid #5c8a84;
    border-bottom: 2px solid #4f7878;
    background: #d8ffff;
}

.status p {
    height: 100%;
    line-height: 18px;
    font-size: 12px;
    text-align: center;
    background: #b3ffff;
    outline: 1px solid #000;
    border: solid;
    border-width: 3px 4px;
    border-color: #d8ffff #d8ffff #78a8a8;
}

/* Windows */
.window {
    position: absolute;
    display: flex;
    flex-direction: column;
    background: var(--green);
    box-shadow: 1px 2px 6px rgba(0, 0, 0, 0.5);
}

.window > header {
    height: 30px;
    flex: none;
    display: flex;
    align-items: center;
    padding: 0 9px 2px 8px;
    background: #fff;
    color: #999;
    font: 13px/18px var(--ui);
}

.window > header h2 {
    flex: 1;
    padding-left: 5px;
}

.wide {
    height: 26px;
    flex: none;
}

.listbox {
    flex: 1;
    min-width: 0;
    overflow: hidden;
    padding: 3px 4px 0 2px;
    white-space: nowrap;
    border: 2px solid;
    border-color: var(--green-lo) var(--green-hi) var(--green-hi) var(--green-lo);
}

.listbox li {
    height: 15px;
    line-height: 15px;
    margin-bottom: 3px;
}

.listbox .sel {
    background: #000;
    color: var(--green);
}

.pane {
    display: flex;
    gap: 3px;
    flex: 1;
    min-height: 0;
}

.vbar, .hbar {
    display: flex;
    border: 2px solid;
    border-color: var(--green-lo) var(--green-hi) var(--green-hi) var(--green-lo);
    background: #3fa890;
}

.vbar {
    width: 14px;
    flex-direction: column;
}

.hbar {
    height: 15px;
}

.vbar svg {
    width: 10px;
    height: 12px;
}

.hbar svg {
    width: 12px;
    height: 11px;
}

.vbar i, .hbar i {
    flex: 1;
    background: var(--green);
    border: 2px solid;
    border-color: var(--green-hi) var(--green-lo) var(--green-lo) var(--green-hi);
}

.low i {
    margin-top: 200px;
}

input[type="radio"] {
    width: 10px;
    height: 10px;
    margin: 0 7px 0 4px;
    transform: rotate(45deg);
    border: 2px solid;
    border-color: var(--light-hi) var(--light-lo) var(--light-lo) var(--light-hi);
}

input[type="radio"]:checked {
    background: #c00048;
    border-color: var(--light-lo) #fff #fff var(--light-lo);
}

/* Checklist Editor */
.checklist {
    right: 0;
    top: 80px;
    width: 384px;
    height: 719px;
    background: var(--light);
    font: bold 15px/18px var(--serif);
}

.checklist nav {
    height: 35px;
    align-self: flex-start;
    display: flex;
    align-items: center;
    gap: 16px;
    padding: 0 11px 0 12px;
    border: 2px solid;
    border-color: #000 var(--light-lo) var(--light-lo) var(--light-hi);
    box-shadow: 1px 0 0 #000;
}

.checklist h3 {
    height: 21px;
    text-align: center;
    border: 1px solid #000;
}

.list-wrap {
    flex: 1;
    min-height: 0;
    display: flex;
    gap: 10px;
    padding: 3px 3px 2px;
    background: var(--green);
    border-left: 1px solid var(--green-lo);
}

.items {
    flex: 1;
    min-width: 0;
    box-shadow: 4px 0 0 -1px var(--green-hi);
}

.items article {
    height: 119px;
    display: flex;
    flex-direction: column;
    padding-top: 1px;
    background: var(--light);
    border: solid #000;
    border-width: 0 1px;
}

.head {
    display: flex;
    height: 29px;
    padding-right: 2px;
}

.head input[type="checkbox"] {
    width: 13px;
    height: 13px;
    margin: 3px 20px 0 3px;
    border: 1px solid;
    border-color: var(--light-lo) var(--light-hi) var(--light-hi) var(--light-lo);
    background: linear-gradient(120deg, transparent 45%, #c00048 45%, #c00048 62%, transparent 62%), linear-gradient(60deg, transparent 24%, #c00048 24%, #c00048 38%, transparent 38%);
}

.head svg {
    width: 20px;
    height: 20px;
    margin-top: 4px;
}

.head b {
    flex: 1;
    min-width: 0;
    overflow: hidden;
    white-space: nowrap;
    padding-left: 5px;
    line-height: 27px;
}

.head .btn {
    width: 44px;
    font: 15px/18px var(--mono);
}

.head input[type="text"] {
    width: 104px;
    margin: 0 4px;
    padding: 0 0 10px 6px;
    font: 15px/15px var(--mono);
    border: 2px solid;
    border-color: var(--light-lo) var(--light-hi) var(--light-hi) var(--light-lo);
}

.head .ask {
    width: 29px;
    padding: 0;
}

.ask span {
    display: block;
    width: 21px;
    margin: auto;
    border: 1px solid #000;
    font: bold 20px/20px "Liberation Sans", sans-serif;
}

.actions {
    display: flex;
    gap: 4px;
    padding: 5px 2px 1px;
}

.actions .btn {
    flex: 1;
    height: 24px;
    border-width: 2px;
}

.run {
    height: 35px;
    display: flex;
    align-items: center;
    gap: 6px;
    padding-left: 2px;
}

.run button {
    width: 28px;
    height: 28px;
    background: var(--green);
    border: 3px solid;
    border-color: var(--green-hi) var(--green-lo) var(--green-lo) var(--green-hi);
}

.run button svg {
    width: 22px;
    height: 22px;
}

.run p {
    flex: 1;
    font: 15px/15px var(--mono);
    text-align: center;
    white-space: nowrap;
    margin-right: 34px;
}

.run .alert {
    width: 18px;
    line-height: 35px;
    background: #ff1818;
    text-align: center;
    margin-left: -6px;
}

.note {
    flex: 1;
    padding-left: 2px;
    background: var(--yellow);
    border: 1px solid #000;
    border-bottom-width: 3px;
    font: 15px/18px var(--mono);
    white-space: nowrap;
}

/* Measure Popup */
.measure {
    right: 0;
    top: 246px;
    width: 184px;
    height: 254px;
}

.measure h3 {
    height: 17px;
    line-height: 15px;
    text-align: center;
    background: var(--light);
    border: 1px solid #000;
    font-weight: bold;
}

.measure label {
    height: 29px;
    display: flex;
    align-items: center;
    padding-left: 3px;
    background: var(--light);
    border: 1px solid #000;
    border-bottom-width: 2px;
    white-space: nowrap;
}

.measure .foot {
    height: 31px;
    margin-top: auto;
    padding: 1px 2px 2px;
    border: 1px solid #000;
    display: flex;
}

.measure .foot .btn {
    flex: 1;
}

/* Results viewer */
.viewer {
    left: 119px;
    top: 387px;
    width: 495px;
    height: 680px;
}

.viewer h3 {
    height: 31px;
    padding: 3px;
    background: var(--light);
    border: 1px solid #000;
    border-bottom-width: 3px;
    font: bold 15px/18px var(--serif);
    text-align: center;
}

.viewer h3 span {
    display: block;
    background: var(--green);
    border: 2px solid;
    border-color: var(--green-hi) var(--green-lo) var(--green-lo) var(--green-hi);
}

.columns {
    flex: 1;
    min-height: 0;
    display: flex;
    border-bottom: 2px solid #000;
}

.col-layers {
    width: 172px;
    display: flex;
    flex-direction: column;
    border-right: 2px solid #000;
    border-left: 1px solid #000;
    gap: 4px;
}

.picker {
    display: flex;
    gap: 2px;
    height: 30px;
    margin-bottom: -4px;
    border-bottom: 1px solid #000;
    font-style: italic;
}

.picker .btn {
    font-weight: normal;
    font-style: italic;
    padding: 0 3px;
}

.picker b {
    flex: 1;
    line-height: 29px;
    text-align: center;
    background: var(--light);
}

.col-layers .hbar {
    margin-right: 16px;
}

.replace {
    height: 32px;
    padding: 1px 2px 1px 6px;
    border-top: 2px solid #000;
    display: flex;
}

.replace select {
    flex: 1;
    padding-left: 3px;
}

.col-cats {
    flex: 1;
    min-width: 0;
    display: flex;
    flex-direction: column;
    padding: 0 2px 2px 0;
}

.cats-head {
    height: 31px;
    display: flex;
    background: var(--light);
}

.cats-head > .btn {
    width: 208px;
    font-style: italic;
}

.cats-head label {
    flex: 1;
    display: flex;
    justify-content: space-between;
    line-height: 30px;
}

.cats-head select {
    width: 60px;
    padding-left: 3px;
}

.col-cats .hbar {
    margin: 5px 16px 3px 0;
}

.part i {
    margin-right: 52px;
}

.seek {
    display: flex;
    gap: 4px;
    align-items: center;
    margin-bottom: 1px;
}

.seek .btn {
    flex: none;
    height: 24px;
    min-width: 45px;
    padding: 0 2px;
    border-width: 2px;
}

.seek label {
    display: flex;
    align-items: center;
    flex: 1;
    min-width: 0;
    gap: 4px;
}

.seek input {
    flex: 1;
    width: 0;
    min-width: 0;
    height: 24px;
    padding: 0 0 4px 4px;
    border: 2px solid;
    border-color: var(--green-lo) var(--green-hi) var(--green-hi) var(--green-lo);
}

.zoomrow {
    display: flex;
    height: 33px;
    margin-bottom: 1px;
}

.auto {
    width: 124px;
    padding: 1px 1px 1px 5px;
    border: 1px solid #000;
    display: flex;
}

.auto select {
    flex: 1;
}

.sv {
    width: 98px;
    display: flex;
    border: 1px solid #000;
    border-left: 0;
    line-height: 31px;
    background: var(--light);
}

.sv select {
    flex: 1;
    margin: 2px 2px 2px 4px;
    background-color: #18ec18;
    outline: 4px solid #18ec18;
    outline-offset: -1px;
    border-width: 2px;
    border-color: #90f890 #108810 #108810 #90f890;
}

.sv {
    overflow: hidden;
}

.showall {
    display: flex;
    align-items: flex-start;
    padding-top: 5px;
    gap: 3px;
    margin-left: 4px;
    white-space: nowrap;
}

.showall input {
    width: 13px;
    height: 13px;
    margin-top: 2px;
    border: 1px solid;
    border-color: var(--green-hi) var(--green-lo) var(--green-lo) var(--green-hi);
}

.marks {
    display: flex;
    justify-content: flex-end;
    gap: 4px;
}

.marks .btn {
    width: 30px;
    height: 30px;
}

.marks .undo {
    width: 34px;
}

.marks .undo svg {
    width: 26px;
}

.info {
    height: 35px;
    padding-top: 3px;
    line-height: 15px;
    text-align: center;
}

.erf {
    height: 22px;
    padding: 1px 0 0 2px;
    line-height: 20px;
    background: var(--yellow);
    border: 1px solid #000;
}

.viewer .foot {
    height: 34px;
    display: flex;
    gap: 4px;
    padding: 2px;
    background: var(--light);
}

.viewer .foot .btn {
    width: 30px;
}

.viewer .foot .grow {
    flex: 1;
}

.viewer .foot .hist {
    border-color: #c81818;
}

/* Results histogram */
.histogram {
    left: 1383px;
    top: 427px;
    width: 466px;
    height: 569px;
    --green-hi: #d0f8f8;
}

.histogram .sel {
    color: var(--light);
}

.hist-top {
    display: flex;
    gap: 2px;
    padding: 3px 5px 0 3px;
    height: 293px;
    border-top: 1px solid #000;
}

.hist-left {
    width: 103px;
    display: flex;
    flex-direction: column;
    background: var(--light);
    border: 1px solid #000;
}

.stats {
    height: 138px;
    padding: 1px 0 0 4px;
    border: solid #000;
    border-width: 1px 1px 2px 0;
}

.stats label {
    display: flex;
    align-items: center;
    height: 27px;
}

.hist-left .pane {
    flex: none;
    height: 114px;
}

.hist-left .vbar i, .hist-left .vbar, .resolution .vbar i, .hist-right .hbar i {
    background: var(--light);
}

.hist-left .listbox, .resolution .listbox {
    border-color: var(--light-lo) var(--light-hi) var(--light-hi) var(--light-lo);
}

.hist-left .marks {
    justify-content: flex-start;
    padding: 3px 2px;
}

.hist-right {
    flex: 1;
    min-width: 0;
    display: flex;
    flex-direction: column;
    background: var(--light);
    border: 2px solid #000;
    border-color: var(--green-lo) var(--light-hi) #000 #000;
}

.hist-right h3 {
    align-self: center;
    width: 260px;
    height: 22px;
    line-height: 23px;
    margin: 3px 0 0;
    font-style: italic;
    text-align: center;
    background: #b3ffff;
    border: 1px solid #000;
    box-shadow: 2px 2px 0 #7a8a8a;
}

.bars {
    flex: 1;
    display: flex;
    align-items: flex-end;
    padding: 0 16px 0 4px;
    border-bottom: 4px solid #000;
}

.bars div {
    flex: 1;
    text-align: center;
    line-height: 16px;
}

.bars .hot {
    color: #f00;
}

.bars i {
    display: block;
    background: #ff1818;
    border: solid #000;
    border-width: 1px 1px 0 0;
}

.bars div:first-child i, .ranges span:first-child {
    border-left-width: 1px;
}

.ranges {
    height: 29px;
    display: flex;
    margin: 1px 16px 8px 4px;
    color: #400;
}

.ranges span {
    flex: 1;
    padding: 1px 0 0 9px;
    line-height: 15px;
    background: #ff1818;
    border: 1px solid #000;
    border-left-width: 0;
}

.hist-right .hbar {
    background: #84b8b8;
}

.hist-right .hbar i {
    flex: none;
    width: 93px;
    margin: 0 auto 0 40px;
}

.resolution {
    height: 64px;
    display: flex;
    border-top: 2px solid #000;
}

.resolution .listbox {
    flex: none;
    width: 92px;
    padding-top: 1px;
}

.resolution .vbar {
    margin: 0 1px 0 4px;
    background: var(--light);
}

.resolution .vbar svg {
    height: 14px;
}

.resolution label {
    flex: 1;
    display: flex;
    flex-direction: column;
    padding: 1px 3px 2px 5px;
    border-left: 1px solid #000;
}

.resolution label span {
    text-align: center;
    margin-bottom: 4px;
}

input[type="range"] {
    width: 100%;
    height: 14px;
    background: #84b8b8;
    border: 2px solid;
    border-color: var(--light-lo) var(--light-hi) var(--light-hi) var(--light-lo);
}

input[type="range"]::-webkit-slider-thumb {
    appearance: none;
    width: 29px;
    height: 10px;
    border: 1px solid var(--light-hi);
    background: linear-gradient(90deg, var(--light) 48%, var(--light-lo) 48%, var(--light-hi) 54%, var(--light) 54%);
}

.sash {
    height: 6px;
    margin: 1px 0 2px;
    border-bottom: 3px solid var(--green-hi);
    border-top: 1px solid var(--green-lo);
    display: flex;
    justify-content: flex-end;
}

.sash i {
    width: 9px;
    height: 8px;
    margin-right: 11px;
    background: var(--green);
    border: 1px solid var(--green-lo);
}

.map {
    flex: 1;
    display: flex;
    align-items: center;
    justify-content: center;
    margin: 0 4px 3px 4px;
    border: 2px solid;
    border-color: #000 var(--green-hi) #000 #000;
    outline: 1px solid var(--green-lo);
}

.map svg {
    width: 172px;
    height: 122px;
}

.summary {
    height: 46px;
    display: flex;
    align-items: center;
    gap: 3px;
    padding: 0 5px 3px;
}

.summary .btn {
    height: 38px;
    min-width: 31px;
    padding: 0 1px;
}

.summary .btn svg.big {
    width: 30px;
    height: 30px;
}

.summary p {
    flex: 1;
    height: 42px;
    line-height: 40px;
    padding-left: 2px;
    background: var(--light);
    border: 1px solid #000;
}

/* Taskbar */
.taskbar {
    height: 40px;
    flex: none;
    display: flex;
    background: #101010;
    color: #fff;
    font: 12px/16px var(--ui);
}

.start {
    width: 52px;
    padding-left: 16px;
}

.start svg, .tray svg {
    width: 16px;
    height: 16px;
}

.task {
    width: 80px;
    margin: 0 4px;
    display: flex;
    align-items: center;
    gap: 5px;
    padding-left: 4px;
    white-space: nowrap;
    overflow: hidden;
    border-bottom: 2px solid #a8dcf8;
}

.task svg {
    width: 22px;
    height: 24px;
}

.current {
    background: #383838;
    width: 86px;
    margin: 0 1px;
    padding-left: 7px;
}

.flash {
    width: 86px;
    margin: 0 1px;
    padding-left: 7px;
    background: #9c5418;
    border-color: #ff7010;
}

.tray {
    flex: 1;
    display: flex;
    align-items: center;
    justify-content: flex-end;
    gap: 10px;
    padding-right: 26px;
}

.tray span {
    font-size: 14px;
    margin-right: 2px;
}

.tray time {
    width: 66px;
    text-align: center;
    line-height: 19px;
    margin: 0 6px 0 2px;
}

.tray .bell {
    width: 18px;
    height: 18px;
}
```
